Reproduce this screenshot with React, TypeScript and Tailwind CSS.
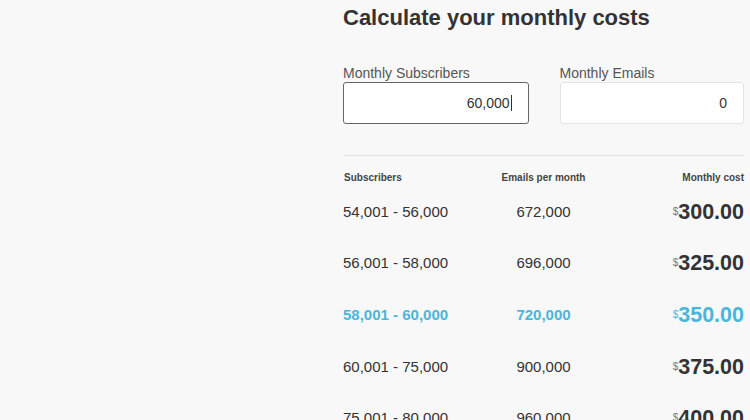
import React from "react";

type Row = { range: string; emails: string; cost: string; active?: boolean };

const rows: Row[] = [
  { range: "54,001 - 56,000", emails: "672,000", cost: "300.00" },
  { range: "56,001 - 58,000", emails: "696,000", cost: "325.00" },
  { range: "58,001 - 60,000", emails: "720,000", cost: "350.00", active: true },
  { range: "60,001 - 75,000", emails: "900,000", cost: "375.00" },
  { range: "75,001 - 80,000", emails: "960,000", cost: "400.00" },
];

export default function App() {
  return (
    <div
      className="h-screen w-full overflow-hidden bg-[#f8f8f8] text-[#333]"
      style={{ fontFamily: '"Liberation Sans", Arial, sans-serif' }}
    >
      <div className="ml-[343px] w-[401px] pt-[5px]">
        <h1 className="text-[22px] leading-[26px] font-bold text-[#333]">
          Calculate your monthly costs
        </h1>

        <div className="mt-[34px] flex gap-[31px]">
          <div className="w-[186px]">
            <div className="text-[14px] leading-[16px] text-[#555]">Monthly Subscribers</div>
            <div className="mt-[1px] flex h-[42px] items-center justify-end rounded-[3px] border border-[#666] bg-white pr-[16px] text-[14px] text-[#333]">
              <span>60,000</span>
              <span className="ml-[1px] inline-block h-[16px] w-[1px] bg-[#333]" />
            </div>
          </div>
          <div className="w-[185px]">
            <div className="text-[14px] leading-[16px] text-[#555]">Monthly Emails</div>
            <div className="mt-[1px] flex h-[42px] items-center justify-end rounded-[3px] border border-[#e4e4e4] bg-white pr-[16px] text-[14px] text-[#333]">
              <span>0</span>
            </div>
          </div>
        </div>

        <div className="mt-[31px] h-px bg-[#e6e6e6]" />

        <div className="grid grid-cols-3 pt-[16px] text-[10px] leading-[12px] font-bold text-[#444]">
          <div className="pl-px">Subscribers</div>
          <div className="text-center">Emails per month</div>
          <div className="text-right">Monthly cost</div>
        </div>

        <div className="mt-[2px]">
          {rows.map((r) => (
            <div
              key={r.range}
              className={
                r.active
                  ? "grid h-[51.6px] grid-cols-3 items-center text-[15px] font-bold text-[#4ab6da]"
                  : "grid h-[51.6px] grid-cols-3 items-center text-[15px] text-[#333]"
              }
            >
              <div className="leading-[18px]">{r.range}</div>
              <div className="text-center leading-[18px]">{r.emails}</div>
              <div className="flex items-start justify-end">
                <span
                  className={
                    r.active
                      ? "mt-[6px] text-[10px] leading-[12px] font-normal text-[#4ab6da]"
                      : "mt-[6px] text-[10px] leading-[12px] font-normal text-[#777]"
                  }
                >
                  $
                </span>
                <span
                  className={
                    r.active
                      ? "text-[21.5px] leading-[24px] font-bold text-[#4ab6da]"
                      : "text-[21.5px] leading-[24px] font-bold text-[#333]"
                  }
                >
                  {r.cost}
                </span>
              </div>
            </div>
          ))}
        </div>
      </div>
    </div>
  );
}
